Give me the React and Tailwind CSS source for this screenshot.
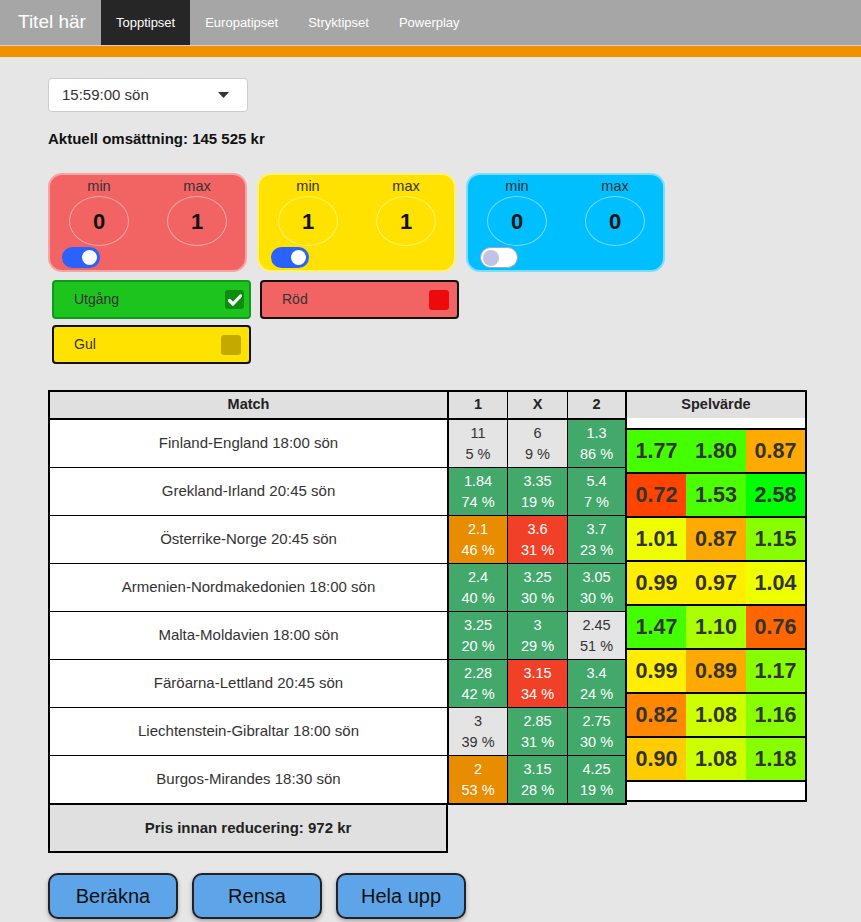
import React from "react";

const ODDS = {
  g: "bg-[#42a96b] text-white",
  w: "bg-[#e4e4e4] text-[#333]",
  o: "bg-[#e88c00] text-white",
  r: "bg-[#f04128] text-white",
};

const rows = [
  {
    m: "Finland-England 18:00 sön",
    o: [["11", "5 %", "w"], ["6", "9 %", "w"], ["1.3", "86 %", "g"]],
    sv: [["1.77", "bg-[#44ff00]"], ["1.80", "bg-[#44ff00]"], ["0.87", "bg-[#ffaa00]"]],
  },
  {
    m: "Grekland-Irland 20:45 sön",
    o: [["1.84", "74 %", "g"], ["3.35", "19 %", "g"], ["5.4", "7 %", "g"]],
    sv: [["0.72", "bg-[#ff4400]"], ["1.53", "bg-[#4cff00]"], ["2.58", "bg-[#00ff00]"]],
  },
  {
    m: "Österrike-Norge 20:45 sön",
    o: [["2.1", "46 %", "o"], ["3.6", "31 %", "r"], ["3.7", "23 %", "g"]],
    sv: [["1.01", "bg-[#eeff00]"], ["0.87", "bg-[#ffaa00]"], ["1.15", "bg-[#88ff00]"]],
  },
  {
    m: "Armenien-Nordmakedonien 18:00 sön",
    o: [["2.4", "40 %", "g"], ["3.25", "30 %", "g"], ["3.05", "30 %", "g"]],
    sv: [["0.99", "bg-[#ffee00]"], ["0.97", "bg-[#ffee00]"], ["1.04", "bg-[#eeff00]"]],
  },
  {
    m: "Malta-Moldavien 18:00 sön",
    o: [["3.25", "20 %", "g"], ["3", "29 %", "g"], ["2.45", "51 %", "w"]],
    sv: [["1.47", "bg-[#44ff00]"], ["1.10", "bg-[#aaff00]"], ["0.76", "bg-[#ff6600]"]],
  },
  {
    m: "Färöarna-Lettland 20:45 sön",
    o: [["2.28", "42 %", "g"], ["3.15", "34 %", "r"], ["3.4", "24 %", "g"]],
    sv: [["0.99", "bg-[#ffee00]"], ["0.89", "bg-[#ffaa00]"], ["1.17", "bg-[#88ff00]"]],
  },
  {
    m: "Liechtenstein-Gibraltar 18:00 sön",
    o: [["3", "39 %", "w"], ["2.85", "31 %", "g"], ["2.75", "30 %", "g"]],
    sv: [["0.82", "bg-[#ff8800]"], ["1.08", "bg-[#ccff00]"], ["1.16", "bg-[#88ff00]"]],
  },
  {
    m: "Burgos-Mirandes 18:30 sön",
    o: [["2", "53 %", "o"], ["3.15", "28 %", "g"], ["4.25", "19 %", "g"]],
    sv: [["0.90", "bg-[#ffcc00]"], ["1.08", "bg-[#ccff00]"], ["1.18", "bg-[#88ff00]"]],
  },
];

function Toggle({ on }) {
  if (on) {
    return (
      <div className="w-[38px] h-[21px] rounded-full bg-[#2962ff] flex items-center justify-end pr-[3px]">
        <div className="w-[15px] h-[15px] rounded-full bg-white" />
      </div>
    );
  }
  return (
    <div className="w-[38px] h-[21px] rounded-full bg-white border border-[#a4a4c8] flex items-center pl-[2px]">
      <div className="w-[16px] h-[16px] rounded-full bg-[#c0c3e3]" />
    </div>
  );
}

function Card({ bg, border, circle, min, max, on }) {
  return (
    <div className={`w-[199px] h-[99px] rounded-[14px] border-2 ${bg} ${border} flex flex-col`}>
      <div className="grid grid-cols-[98px_98px] pt-[2px]">
        {[["min", min], ["max", max]].map(([l, v]) => (
          <div key={l} className="flex flex-col items-center">
            <div className="text-[14.5px] leading-[18px] text-[#333]">{l}</div>
            <div className={`mt-[1px] w-[60px] h-[50px] rounded-[50%] border ${circle} flex items-center justify-center text-[22px] font-bold text-[#111]`}>
              {v}
            </div>
          </div>
        ))}
      </div>
      <div className="ml-[12px] mt-[1px]">
        <Toggle on={on} />
      </div>
    </div>
  );
}

function CheckBtn({ label, bg, border, box, pr, checked }) {
  return (
    <div className={`w-[199px] h-[39px] rounded-[4px] border-2 ${bg} ${border} flex items-center justify-between pl-[20px] ${pr}`}>
      <span className="text-[14px] text-[#333]">{label}</span>
      <div className={`${box} rounded-[3px] flex items-center justify-center`}>
        {checked && (
          <svg width="14" height="12" viewBox="0 0 14 12">
            <path d="M1.5 6.5 L5 10 L12.5 2" fill="none" stroke="white" strokeWidth="3.2" strokeLinecap="round" strokeLinejoin="round" />
          </svg>
        )}
      </div>
    </div>
  );
}

export default function App() {
  return (
    <div className="min-h-screen bg-[#e6e6e6] font-['Liberation_Sans',Arial,sans-serif] text-[#222]">
      <div className="flex h-[45px] bg-[#a6a6a6] border-b border-[#d4d4d4] box-content">
        <div className="pl-[18px] pr-[15px] flex items-center text-[19px] text-white">Titel här</div>
        <div className="flex h-full">
          {["Topptipset", "Europatipset", "Stryktipset", "Powerplay"].map((t, i) => (
            <div
              key={t}
              className={`h-full px-[15px] flex items-center text-[13px] text-white ${i === 0 ? "bg-[#262626]" : ""}`}
            >
              {t}
            </div>
          ))}
        </div>
      </div>
      <div className="h-[11px] bg-[#f29100]" />

      <div className="pl-[48px] pt-[21px] pb-[8px]">
        <div className="w-[200px] h-[34px] bg-white border border-[#ccc] rounded-[4px] flex items-center justify-between pl-[13px] pr-[18px]">
          <span className="text-[15px] text-[#333]">15:59:00 sön</span>
          <svg width="11" height="6" viewBox="0 0 11 6">
            <path d="M0 0 L11 0 L5.5 6 Z" fill="#333" />
          </svg>
        </div>

        <div className="mt-[17px] text-[15px] leading-[20px] font-bold text-[#111]">
          Aktuell omsättning: 145 525 kr
        </div>

        <div className="mt-[24px] flex gap-[10px]">
          <Card bg="bg-[#f26464]" border="border-[#f7a3a3]" circle="border-[#f8a8a8]" min="0" max="1" on />
          <Card bg="bg-[#ffe200]" border="border-[#fff07a]" circle="border-[#fff07a]" min="1" max="1" on />
          <Card bg="bg-[#00bfff]" border="border-[#80dcff]" circle="border-[#7fd8ff]" min="0" max="0" on={false} />
        </div>

        <div className="mt-[8px] ml-[4px] flex flex-col gap-[6px]">
          <div className="flex gap-[9px]">
            <CheckBtn
              label="Utgång"
              bg="bg-[#1ec41e]"
              border="border-[#10991a]"
              box="w-[19px] h-[19px] bg-[#0e8c0e]"
              pr="pr-[5px]"
              checked
            />
            <CheckBtn
              label="Röd"
              bg="bg-[#f26464]"
              border="border-[#111]"
              box="w-[20px] h-[20px] bg-[#ee0a0a]"
              pr="pr-[8px]"
            />
          </div>
          <CheckBtn
            label="Gul"
            bg="bg-[#ffe200]"
            border="border-[#111]"
            box="w-[20px] h-[20px] bg-[#c4aa00]"
            pr="pr-[8px]"
          />
        </div>

        <div className="mt-[26px] flex items-start">
          <div className="w-[579px] border-2 border-black bg-white">
            <div className="flex h-[26px] bg-[#e0e0e0] border-b-2 border-black box-content text-[14.5px] font-bold text-[#222]">
              <div className="w-[399px] border-r-2 border-black flex items-center justify-center">Match</div>
              <div className="w-[59px] border-r border-black flex items-center justify-center">1</div>
              <div className="w-[60px] border-r border-black flex items-center justify-center">X</div>
              <div className="w-[57px] flex items-center justify-center">2</div>
            </div>
            {rows.map((r, i) => (
              <div key={r.m} className={`flex ${i === 0 ? "h-[47px]" : "h-[48px] border-t border-black"}`}>
                <div className="w-[399px] border-r-2 border-black flex items-center justify-center text-[15px] text-[#333]">
                  {r.m}
                </div>
                {r.o.map(([a, b, c], j) => (
                  <div
                    key={j}
                    className={`${j === 0 ? "w-[59px] border-r border-black" : j === 1 ? "w-[60px] border-r border-black" : "w-[57px]"} ${ODDS[c]} flex flex-col items-center justify-center text-[14.5px] leading-[21px]`}
                  >
                    <span>{a}</span>
                    <span>{b}</span>
                  </div>
                ))}
              </div>
            ))}
          </div>

          <div className="w-[180px] border-y-2 border-r-2 border-black bg-white flex flex-col">
            <div className="h-[26px] bg-[#e0e0e0] flex items-center justify-center text-[14.5px] font-bold text-[#222]">
              Spelvärde
            </div>
            <div className="h-[10px]" />
            {rows.map((r) => (
              <div key={r.m} className="h-[44px] border-t-2 border-black grid grid-cols-[59px_60px_59px]">
                {r.sv.map(([v, c], j) => (
                  <div key={j} className={`${c} flex items-center justify-center text-[21.5px] font-bold text-[#333]`}>
                    {v}
                  </div>
                ))}
              </div>
            ))}
            <div className="h-[20px] border-t-2 border-black" />
          </div>
        </div>

        <div className="w-[400px] h-[48px] border-x-2 border-b-2 border-black bg-[#e0e0e0] flex items-center justify-center text-[15px] font-bold text-[#222]">
          Pris innan reducering: 972 kr
        </div>

        <div className="mt-[20px] flex gap-[14px]">
          {["Beräkna", "Rensa", "Hela upp"].map((b) => (
            <button
              key={b}
              className="w-[130px] h-[46px] rounded-[10px] border-2 border-[#222] bg-[#5ea4e8] text-[20px] text-[#111] shadow-[0_2px_4px_rgba(0,0,0,0.3)]"
            >
              {b}
            </button>
          ))}
        </div>
      </div>
    </div>
  );
}
